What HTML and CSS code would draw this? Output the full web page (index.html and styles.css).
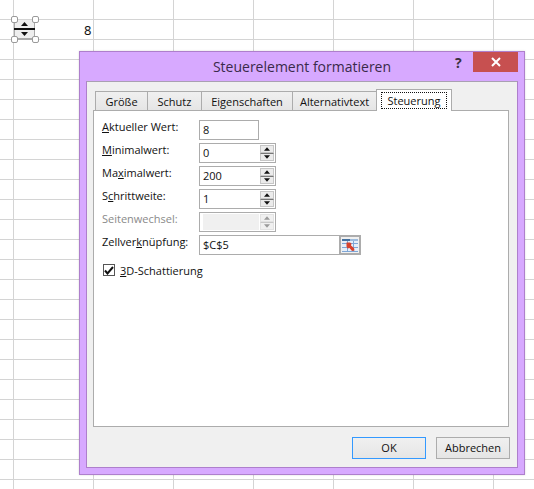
FILE: index.html
```html
<!DOCTYPE html>
<html lang="de">
<head>
<meta charset="utf-8">
<title>Steuerelement formatieren</title>
<link rel="stylesheet" href="styles.css">
</head>
<body>
<main class="sheet">
  <div class="spinner-control">
    <div class="sc-btn"><svg width="7" height="4" viewBox="0 0 7 4"><path d="M3.500 0 7 4H0z"/></svg></div>
    <div class="sc-line"></div>
    <div class="sc-btn"><svg width="7" height="4" viewBox="0 0 7 4"><path d="M0 0h7L3.500 4z"/></svg></div>
    <i class="handle h1"></i><i class="handle h2"></i><i class="handle h3"></i><i class="handle h4"></i>
  </div>
  <div class="cell-value">8</div>

  <section class="dialog">
    <header class="titlebar">
      <h1 class="title">Steuerelement formatieren</h1>
      <span class="help">?</span>
      <span class="close"><svg width="10" height="10" viewBox="0 0 10 10"><path d="M1 1l8 8M9 1L1 9" stroke="#fff" stroke-width="2"/></svg></span>
    </header>
    <div class="client">
      <nav class="tabs">
        <span class="tab t1">Größe</span>
        <span class="tab t2">Schutz</span>
        <span class="tab t3">Eigenschaften</span>
        <span class="tab t4">Alternativtext</span>
        <span class="tab active"><span class="focus">Steuerung</span></span>
      </nav>
      <div class="panel">
        <div class="row">
          <label class="label"><u>A</u>ktueller Wert:</label>
          <div class="field short">8</div>
        </div>
        <div class="row">
          <label class="label"><u>M</u>inimalwert:</label>
          <div class="field spin"><span class="val">0</span>
            <span class="updown">
              <span class="ud"><svg width="7" height="4" viewBox="0 0 7 4"><path d="M3.500 0 7 4H0z"/></svg></span>
              <span class="ud"><svg width="7" height="4" viewBox="0 0 7 4"><path d="M0 0h7L3.500 4z"/></svg></span>
            </span>
          </div>
        </div>
        <div class="row">
          <label class="label">Ma<u>x</u>imalwert:</label>
          <div class="field spin"><span class="val">200</span>
            <span class="updown">
              <span class="ud"><svg width="7" height="4" viewBox="0 0 7 4"><path d="M3.500 0 7 4H0z"/></svg></span>
              <span class="ud"><svg width="7" height="4" viewBox="0 0 7 4"><path d="M0 0h7L3.500 4z"/></svg></span>
            </span>
          </div>
        </div>
        <div class="row">
          <label class="label">S<u>c</u>hrittweite:</label>
          <div class="field spin"><span class="val">1</span>
            <span class="updown">
              <span class="ud"><svg width="7" height="4" viewBox="0 0 7 4"><path d="M3.500 0 7 4H0z"/></svg></span>
              <span class="ud"><svg width="7" height="4" viewBox="0 0 7 4"><path d="M0 0h7L3.500 4z"/></svg></span>
            </span>
          </div>
        </div>
        <div class="row disabled">
          <label class="label">Seitenwechsel:</label>
          <div class="field spin"><span class="val fill"></span>
            <span class="updown">
              <span class="ud"><svg width="7" height="4" viewBox="0 0 7 4"><path d="M3.500 0 7 4H0z"/></svg></span>
              <span class="ud"><svg width="7" height="4" viewBox="0 0 7 4"><path d="M0 0h7L3.500 4z"/></svg></span>
            </span>
          </div>
        </div>
        <div class="row">
          <label class="label">Zellver<u>k</u>nüpfung:</label>
          <div class="field long"><span class="val">$C$5</span>
            <span class="picker">
              <svg width="16" height="13" viewBox="0 0 16 13">
                <rect x="0" y="0" width="16" height="13" fill="#e6eef8"/>
                <path d="M0 0h8v2H0z" fill="#44719f"/>
                <path d="M8 0h8v2H8z" fill="#9dbbdc"/>
                <path d="M0 4.500h16M0 8.500h16M0 12.500h16M5.500 2v11M11.500 2v11" stroke="#7ea6d6"/>
                <path d="M4.500 3.500l3.500 0 1.500 1-.5 2 3 2.500.5 2.500-2.500.5-2.500-3-2 .5-1-2z" fill="#d8412b"/>
              </svg>
            </span>
          </div>
        </div>
        <div class="check-row">
          <span class="checkbox"><svg width="10" height="9" viewBox="0 0 10 9"><path d="M1 4.500l2.500 3L9 1" fill="none" stroke="#111" stroke-width="2"/></svg></span>
          <span class="check-label"><u>3</u>D-Schattierung</span>
        </div>
      </div>
      <footer class="buttons">
        <span class="btn default">OK</span>
        <span class="btn">Abbrechen</span>
      </footer>
    </div>
  </section>
</main>
</body>
</html>
```
FILE: styles.css
```css
* { box-sizing: border-box; }
html, body { margin: 0; padding: 0; }
body {
  width: 534px;
  height: 489px;
  overflow: hidden;
  background: #fff;
  font-family: "Open Sans", "Noto Sans", sans-serif;
  font-size: 11px;
  color: #111;
}
.sheet {
  position: relative;
  width: 534px;
  height: 489px;
  background-color: #fff;
  background-image:
    linear-gradient(to right, #d4d4d4 1px, transparent 1px),
    linear-gradient(to bottom, #d4d4d4 1px, transparent 1px);
  background-size: 80px 20px;
  background-position: 13px 19px;
}
.spinner-control {
  position: absolute;
  left: 14px;
  top: 20px;
  width: 21px;
  height: 20px;
  display: flex;
  flex-direction: column;
  background: #eee;
  border-right: 1px solid #a8a8a8;
  border-bottom: 2px solid #a8a8a8;
  border-left: 1px solid #a8a8a8;
}
.sc-btn { flex: 1; display: flex; align-items: center; justify-content: center; }
.sc-btn svg { fill: #111; }
.sc-line { height: 2px; background: #111; margin: 0 -1px; }
.handle {
  position: absolute;
  width: 7px;
  height: 7px;
  background: #fff;
  border: 1px solid #9a9a9a;
  border-radius: 2px;
}
.h1 { left: -4px; top: -4px; }
.h2 { right: -5px; top: -4px; }
.h3 { left: -4px; bottom: -5px; }
.h4 { right: -5px; bottom: -5px; }
.cell-value {
  position: absolute;
  left: 84px;
  top: 21px;
  font-family: "Noto Sans", sans-serif;
  font-size: 13px;
  line-height: 18px;
  color: #111;
}
.dialog {
  position: absolute;
  left: 79px;
  top: 51px;
  width: 446px;
  height: 424px;
  display: flex;
  flex-direction: column;
  background: #d7a9ff;
  border: 1px solid #ae7fcc;
  padding: 0 6px 6px 6px;
  box-shadow: 0 0 2px rgba(0,0,0,.15);
}
.titlebar {
  position: relative;
  height: 29px;
  flex: none;
  display: flex;
  align-items: center;
  justify-content: center;
}
.title {
  margin: 1px 0 0;
  font-weight: 400;
  font-size: 14px;
  line-height: 28px;
  color: #3a2a4a;
}
.help {
  position: absolute;
  left: 369px;
  top: 2px;
  font-weight: 700;
  font-size: 14px;
  line-height: 18px;
  color: #3a3040;
}
.close {
  position: absolute;
  right: 0;
  top: 0;
  width: 45px;
  height: 20px;
  background: #c75050;
  display: flex;
  align-items: center;
  justify-content: center;
}
.client {
  flex: 1;
  min-height: 0;
  display: flex;
  flex-direction: column;
  background: #f0f0f0;
  border: 1px solid #ae7fcc;
  border-top-color: #a9a0b2;
  padding: 7px 8px 0 6px;
}
.tabs {
  display: flex;
  align-items: flex-end;
  height: 22px;
  flex: none;
  padding-left: 2px;
  margin-bottom: -1px;
  position: relative;
  z-index: 1;
}
.tab {
  height: 19px;
  margin-bottom: 1px;
  border: 1px solid #acacac;
  border-bottom: 0;
  border-right: 0;
  background: linear-gradient(#f0f0f0, #e5e5e5);
  text-align: center;
  line-height: 20px;
}
.t1 { width: 52px; }
.t2 { width: 54px; }
.t3 { width: 91px; }
.t4 { width: 84px; }
.tab.active {
  height: 22px;
  width: 76px;
  margin-bottom: 0;
  background: #fff;
  border-right: 1px solid #acacac;
  padding: 2px 4px 0;
}
.focus {
  display: block;
  height: 17px;
  line-height: 15px;
  border: 1px dotted #111;
}
.panel {
  height: 317px;
  flex: none;
  background: #fff;
  border: 1px solid #acacac;
  padding: 9px 0 0 8px;
  display: flex;
  flex-direction: column;
  gap: 3px;
}
.row { display: flex; height: 20px; }
.label { width: 97px; flex: none; line-height: 13px; }
.label u, .check-label u { text-underline-offset: 1px; }
.field {
  display: flex;
  align-items: stretch;
  height: 20px;
  border: 1px solid #acacac;
  background: #fff;
  padding-left: 3px;
  line-height: 17px;
}
.short { width: 60px; }
.spin { width: 77px; }
.long { width: 162px; }
.val { flex: 1; }
.updown {
  width: 14px;
  margin: 1px 1px 1px 0;
  display: flex;
  flex-direction: column;
}
.ud {
  flex: 1;
  background: #ebebeb;
  display: flex;
  align-items: center;
  justify-content: center;
  border: 1px solid #c6c6c6;
}
.ud + .ud { border-top: 1px solid #777; }
.ud svg { fill: #111; width: 6px; height: 4px; }
.disabled .label { color: #8a8a8a; }
.disabled .field { padding: 1px 0 1px 3px; }
.disabled .val.fill { background: #f0f0f0; margin-right: 1px; }
.disabled .updown { margin: 0 1px 0 0; }
.disabled .ud { background: #f0f0f0; border-color: #e2e2e2; }
.disabled .ud + .ud { border-top-color: #c8c8c8; }
.disabled .ud svg { fill: #9a9a9a; }
.picker {
  width: 22px;
  margin: -1px -1px -1px 0;
  border: 2px solid #acacac;
  background: #f0f0f0;
  display: flex;
  align-items: center;
  justify-content: center;
}
.check-row {
  display: flex;
  align-items: center;
  margin: 3px 0 0 1px;
  height: 18px;
}
.checkbox {
  width: 12px;
  height: 12px;
  border: 1px solid #555;
  background: #fff;
  display: flex;
  align-items: center;
  justify-content: center;
  margin-right: 5px;
}
.buttons {
  display: flex;
  justify-content: flex-end;
  gap: 10px;
  margin-top: 10px;
  margin-right: -1px;
}
.btn {
  width: 74px;
  height: 22px;
  border: 1px solid #acacac;
  background: linear-gradient(#f0f0f0, #e5e5e5);
  text-align: center;
  line-height: 20px;
}
.btn.default { border-color: #3399ff; }
```
